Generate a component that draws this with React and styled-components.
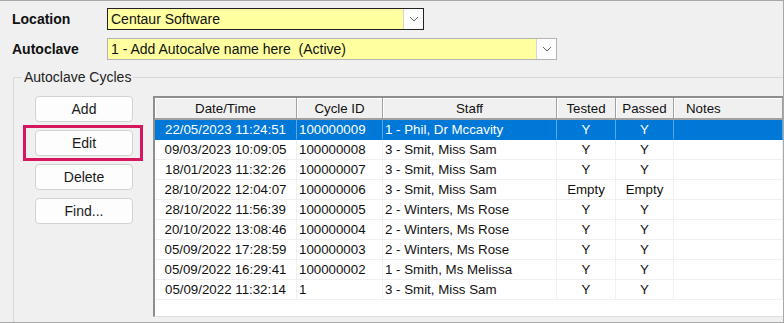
import styled, { createGlobalStyle } from 'styled-components';

const GlobalStyle = createGlobalStyle`
  body {
    margin: 0;
    background: #f0f0f0;
  }
`;

const Frame = styled.div`
  width: 784px;
  height: 323px;
  box-sizing: border-box;
  border: 1px solid #a8a8a8;
  border-left: none;
  background: #f0f0f0;
  overflow: hidden;
  font-family: "Liberation Sans", Arial, sans-serif;
  color: #1a1a1a;
`;

const Fields = styled.div`
  display: flex;
  flex-direction: column;
  gap: 8px;
  padding: 7px 0 0 12px;
`;

const FieldRow = styled.div`
  display: grid;
  grid-template-columns: 95px auto;
  align-items: center;
  justify-content: start;
`;

const Label = styled.div`
  font-size: 14px;
  font-weight: bold;
  color: #111;
`;

const Combo = styled.div`
  display: flex;
  align-items: center;
  width: ${(p) => p.width}px;
  height: 22px;
  box-sizing: border-box;
  border: 1px solid ${(p) => (p.focused ? '#222' : '#b4b4b4')};
  background: #ffffa0;
`;

const ComboText = styled.div`
  flex: 1;
  padding-left: 3px;
  font-size: 14px;
  white-space: pre;
  color: #111;
`;

const DropButton = styled.div`
  width: 20px;
  height: 100%;
  box-sizing: border-box;
  border-left: 1px solid #d4d4d4;
  background: #fdfdfd;
  display: flex;
  align-items: center;
  justify-content: center;
`;

const GroupBox = styled.fieldset`
  margin: 9px 0 0 13px;
  padding: 0 0 0 8px;
  min-width: 0;
  height: 300px;
  border: 1px solid #d8d8d8;
  border-right: none;
  border-bottom: none;
`;

const GroupTitle = styled.legend`
  padding: 0 2px;
  font-size: 14px;
  color: #222;
`;

const GroupBody = styled.div`
  display: flex;
  align-items: flex-start;
  gap: 20px;
  padding: 11px 0 0 13px;
`;

const ButtonColumn = styled.div`
  display: flex;
  flex-direction: column;
  gap: 8px;
  width: 98px;
  flex-shrink: 0;
`;

const Button = styled.button`
  position: relative;
  height: 26px;
  padding: 0;
  box-sizing: border-box;
  border: 1px solid #d2d2d2;
  border-radius: 4px;
  background: #fdfdfd;
  font-family: "Liberation Sans", Arial, sans-serif;
  font-size: 14px;
  color: #1a1a1a;

  ${(p) =>
    p.highlighted &&
    `
    &::after {
      content: '';
      position: absolute;
      top: -6px;
      bottom: -6px;
      left: -13px;
      right: -11px;
      border: 3px solid #d6175f;
      pointer-events: none;
    }
  `}
`;

const Grid = styled.div`
  flex: 1;
  min-width: 0;
  height: 221px;
  box-sizing: border-box;
  border-top: 2px solid #8e8e8e;
  border-left: 2px solid #8e8e8e;
  border-bottom: 1px solid #dedede;
  background: #fff;
  font-size: 13.3px;
`;

const Row = styled.div`
  display: grid;
  grid-template-columns: 142px 86px 174px 59px 58px 1fr;
  height: ${(p) => (p.header ? 22 : 20)}px;
  background: ${(p) => (p.header ? '#f0f0f0' : p.selected ? '#0078d7' : '#fff')};
  color: ${(p) => (p.selected ? '#fff' : '#111')};
`;

const HeadCell = styled.div`
  display: flex;
  align-items: center;
  justify-content: ${(p) => (p.left ? 'flex-start' : 'center')};
  padding-left: ${(p) => (p.left ? '12px' : '0')};
  box-sizing: border-box;
  border-right: 1px solid #a0a0a0;
  border-bottom: 2px solid #a0a0a0;
  box-shadow: inset 1px 1px 0 #fff;
  white-space: nowrap;
  overflow: hidden;
`;

const Cell = styled.div`
  display: flex;
  align-items: center;
  justify-content: ${(p) => (p.center ? 'center' : 'flex-start')};
  padding: 0 2px;
  box-sizing: border-box;
  border-right: 1px solid ${(p) => (p.selected ? '#5aa7e6' : '#f0f0f0')};
  border-bottom: 1px solid ${(p) => (p.selected ? '#0078d7' : '#f0f0f0')};
  white-space: nowrap;
  overflow: hidden;
`;

const Chevron = () => (
  <svg width="10" height="6" viewBox="0 0 10 6">
    <path d="M1 1 L5 5 L9 1" fill="none" stroke="#666" strokeWidth="1" />
  </svg>
);

const cycles = [
  ['22/05/2023 11:24:51', '100000009', '1 - Phil, Dr Mccavity', 'Y', 'Y'],
  ['09/03/2023 10:09:05', '100000008', '3 - Smit, Miss Sam', 'Y', 'Y'],
  ['18/01/2023 11:32:26', '100000007', '3 - Smit, Miss Sam', 'Y', 'Y'],
  ['28/10/2022 12:04:07', '100000006', '3 - Smit, Miss Sam', 'Empty', 'Empty'],
  ['28/10/2022 11:56:39', '100000005', '2 - Winters, Ms Rose', 'Y', 'Y'],
  ['20/10/2022 13:08:46', '100000004', '2 - Winters, Ms Rose', 'Y', 'Y'],
  ['05/09/2022 17:28:59', '100000003', '2 - Winters, Ms Rose', 'Y', 'Y'],
  ['05/09/2022 16:29:41', '100000002', '1 - Smith, Ms Melissa', 'Y', 'Y'],
  ['05/09/2022 11:32:14', '1', '3 - Smit, Miss Sam', 'Y', 'Y'],
];

export default function App() {
  return (
    <Frame>
      <GlobalStyle />
      <Fields>
        <FieldRow>
          <Label>Location</Label>
          <Combo width={317} focused>
            <ComboText>Centaur Software</ComboText>
            <DropButton><Chevron /></DropButton>
          </Combo>
        </FieldRow>
        <FieldRow>
          <Label>Autoclave</Label>
          <Combo width={450}>
            <ComboText>1 - Add Autocalve name here  (Active)</ComboText>
            <DropButton><Chevron /></DropButton>
          </Combo>
        </FieldRow>
      </Fields>
      <GroupBox>
        <GroupTitle>Autoclave Cycles</GroupTitle>
        <GroupBody>
          <ButtonColumn>
            <Button>Add</Button>
            <Button highlighted>Edit</Button>
            <Button>Delete</Button>
            <Button>Find...</Button>
          </ButtonColumn>
          <Grid>
            <Row header>
              <HeadCell>Date/Time</HeadCell>
              <HeadCell>Cycle ID</HeadCell>
              <HeadCell>Staff</HeadCell>
              <HeadCell>Tested</HeadCell>
              <HeadCell>Passed</HeadCell>
              <HeadCell left>Notes</HeadCell>
            </Row>
            {cycles.map((c, i) => {
              const sel = i === 0;
              return (
                <Row key={i} selected={sel}>
                  <Cell center selected={sel}>{c[0]}</Cell>
                  <Cell selected={sel}>{c[1]}</Cell>
                  <Cell selected={sel}>{c[2]}</Cell>
                  <Cell center selected={sel}>{c[3]}</Cell>
                  <Cell center selected={sel}>{c[4]}</Cell>
                  <Cell selected={sel} />
                </Row>
              );
            })}
          </Grid>
        </GroupBody>
      </GroupBox>
    </Frame>
  );
}
